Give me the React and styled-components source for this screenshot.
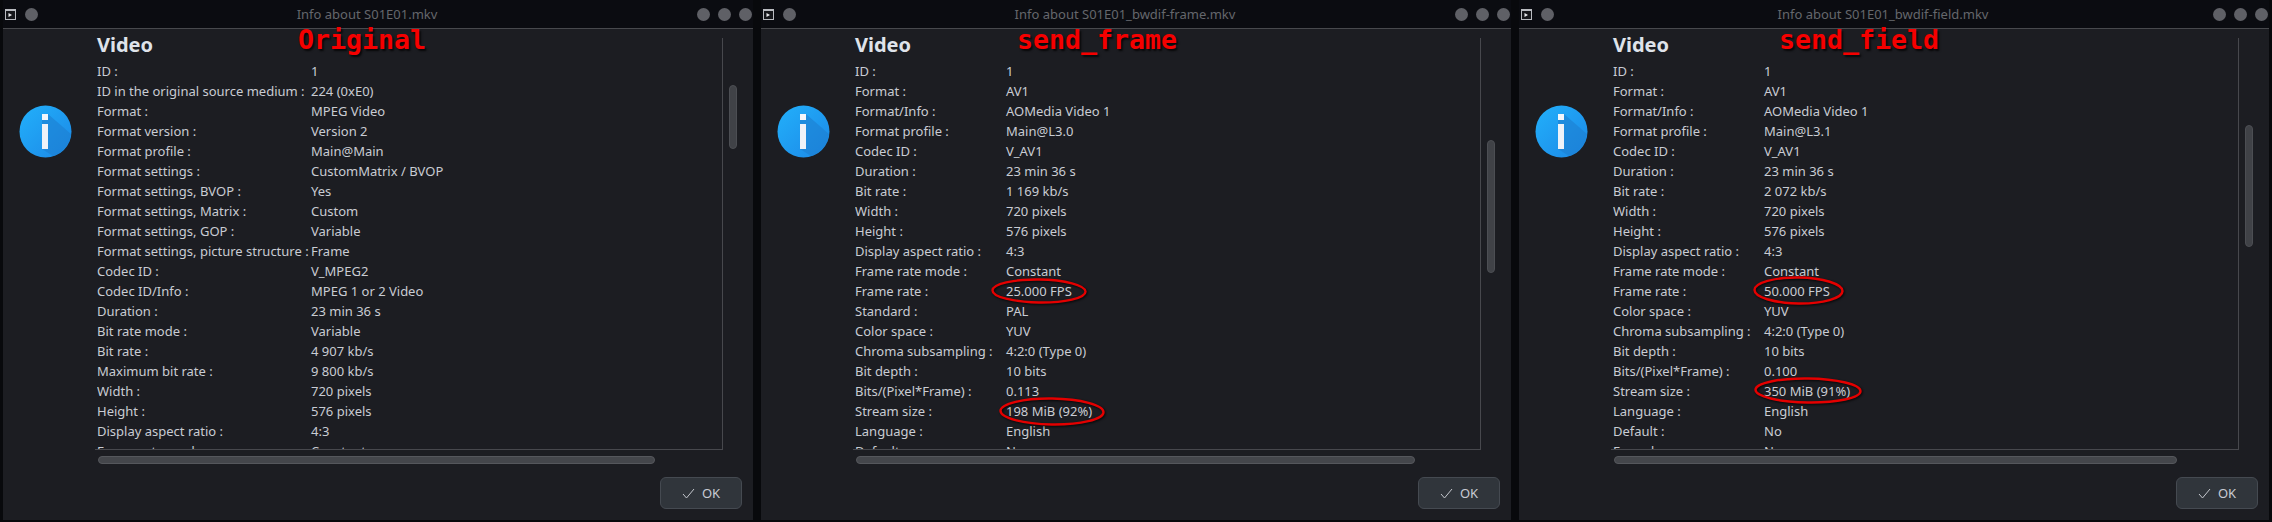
import React from "react";
import styled, { createGlobalStyle } from "styled-components";

const Global = createGlobalStyle`
  html, body { margin: 0; padding: 0; background: #08090c; overflow: hidden; }
  #root { width: 2272px; height: 522px; }
`;

const Page = styled.div`
  display: flex;
  gap: 8px;
  width: 2272px;
  height: 522px;
  padding: 0 0 2px 3px;
  box-sizing: border-box;
  background: #08090c;
  font-family: "Noto Sans", sans-serif;
`;

const Window = styled.section`
  position: relative;
  flex: none;
  width: ${(p) => p.$width}px;
  height: 520px;
  display: flex;
  flex-direction: column;
  background: #1c1d22;
`;

const TitleBar = styled.header`
  flex: none;
  height: 28px;
  padding-right: ${(p) => p.$inset + 1}px;
  border-bottom: 1px solid #48494d;
  background: #0b0c11;
  display: flex;
  align-items: center;
  padding-left: 2px;
`;

const LeftGroup = styled.div`
  display: flex;
  align-items: center;
  gap: 9px;
  width: 62px;
  flex: none;
`;

const RightGroup = styled.div`
  display: flex;
  align-items: center;
  gap: 8px;
  width: 55px;
  flex: none;
  justify-content: flex-end;
`;

const Title = styled.h1`
  flex: 1;
  margin: 0;
  padding-right: 30px;
  text-align: center;
  font-size: 13px;
  font-weight: 400;
  color: #65676c;
  white-space: nowrap;
`;

const Dot = styled.span`
  width: 13px;
  height: 13px;
  border-radius: 50%;
  background: #5f6066;
  display: block;
  flex: none;
`;

const Body = styled.div`
  flex: 1;
  min-height: 0;
  display: flex;
  padding: 9px ${(p) => p.$inset + 30}px 0 0;
`;

const IconColumn = styled.div`
  flex: none;
  width: 92px;
  padding: 67px 0 0 16px;
  box-sizing: border-box;
`;

const Main = styled.div`
  flex: 1;
  min-width: 0;
  display: flex;
  flex-direction: column;
  position: relative;
`;

const Frame = styled.div`
  height: 412px;
  box-sizing: border-box;
  padding-left: 2px;
  display: flex;
  flex-direction: column;
  border-right: 1px solid #47484d;
  border-bottom: 1px solid #47484d;
`;

const Heading = styled.h2`
  flex: none;
  margin: -8px 0 0;
  height: 31px;
  line-height: 30px;
  font-size: 20px;
  font-weight: 700;
  color: #dfe3ea;
`;

const Rows = styled.div`
  flex: 1;
  min-height: 0;
  overflow: hidden;
`;

const Row = styled.div`
  display: flex;
  height: 20px;
  line-height: 20px;
  font-size: 13px;
  color: #c9ccd3;
  white-space: nowrap;
`;

const Label = styled.span`
  flex: none;
  width: ${(p) => p.$width}px;
`;

const Value = styled.span`
  flex: none;
`;

const HTrack = styled.div`
  margin: 6px 0 0 3px;
  width: ${(p) => p.$width}px;
  height: 8px;
  box-sizing: border-box;
  border-radius: 4px;
  background: #44464b;
  border: 1px solid #55575c;
`;

const Footer = styled.div`
  display: flex;
  justify-content: flex-end;
  margin: 13px -19px 0 0;
`;

const OkButton = styled.button`
  width: 82px;
  height: 32px;
  box-sizing: border-box;
  border: 1px solid #454a51;
  border-radius: 6px;
  background: #30353b;
  color: #c9ccd3;
  font-family: inherit;
  font-size: 13px;
  display: flex;
  align-items: center;
  justify-content: center;
  gap: 7px;
  padding: 0;
`;

const VRail = styled.div`
  position: absolute;
  top: 0;
  right: -14px;
  width: 8px;
`;

const VThumb = styled.div`
  margin-top: ${(p) => p.$top}px;
  height: ${(p) => p.$height}px;
  box-sizing: border-box;
  border-radius: 4px;
  background: #404247;
  border: 1px solid #4c4e53;
`;

const Caption = styled.div`
  position: absolute;
  left: ${(p) => p.$left}px;
  top: 24px;
  font-family: "DejaVu Sans Mono", monospace;
  font-weight: 700;
  font-size: 26.6px;
  line-height: 32px;
  color: #f50000;
  text-shadow: 2px 2px 2px rgba(0, 0, 0, 0.75);
  white-space: nowrap;
`;

const Ring = styled.svg`
  position: absolute;
  left: ${(p) => p.$left}px;
  top: ${(p) => p.$top}px;
  width: ${(p) => p.$w}px;
  height: ${(p) => p.$h}px;
  overflow: visible;
  filter: drop-shadow(1px 1px 1px rgba(0, 0, 0, 0.8));
`;

function AppIcon() {
  return (
    <svg width="11" height="11" viewBox="0 0 11 11" style={{ flex: "none" }}>
      <rect x="0.5" y="0.5" width="10" height="10" fill="#15161a" stroke="#b9bbc0" />
      <rect x="0" y="0" width="11" height="2" fill="#b9bbc0" />
      <path d="M3.5 4 L7 6 L3.5 8 Z" fill="#e8e9ec" />
    </svg>
  );
}

function InfoIcon({ id }) {
  return (
    <svg width="53" height="53" viewBox="0 0 53 53" style={{ display: "block" }}>
      <defs>
        <linearGradient id={id} x1="0" y1="0" x2="1" y2="1">
          <stop offset="0" stopColor="#22b0fb" />
          <stop offset="1" stopColor="#1c88e6" />
        </linearGradient>
      </defs>
      <circle cx="26.5" cy="26.5" r="26" fill={`url(#${id})`} />
      <path d="M29 9 L52 29 A26 26 0 0 1 34 51 L23 44 L23 15 Z" fill="#1c7fd0" opacity="0.6" />
      <rect x="23" y="9" width="6" height="6" fill="#f3f6fb" />
      <rect x="23" y="19" width="6" height="25" fill="#eef2f8" />
    </svg>
  );
}

function Check() {
  return (
    <svg width="13" height="11" viewBox="0 0 13 11">
      <path d="M1 6 L4.5 10 L12 1" fill="none" stroke="#c4c7cd" strokeWidth="1" />
    </svg>
  );
}

function Ellipse({ left, top, w, h, tilt }) {
  return (
    <Ring $left={left} $top={top} $w={w} $h={h} viewBox={`0 0 ${w} ${h}`}>
      <ellipse
        cx={w / 2}
        cy={h / 2}
        rx={w / 2 - 1.5}
        ry={h / 2 - 1.5}
        fill="none"
        stroke="#e40000"
        strokeWidth="2.4"
        transform={`rotate(${tilt} ${w / 2} ${h / 2})`}
      />
    </Ring>
  );
}

const windows = [
  {
    key: "a",
    title: "Info about S01E01.mkv",
    caption: "Original",
    captionLeft: 295,
    labelWidth: 214,
    trackWidth: 557,
    thumbTop: 47,
    thumbHeight: 64,
    width: 750,
    inset: 0,
    rings: [],
    rows: [
      ["ID :", "1"],
      ["ID in the original source medium :", "224 (0xE0)"],
      ["Format :", "MPEG Video"],
      ["Format version :", "Version 2"],
      ["Format profile :", "Main@Main"],
      ["Format settings :", "CustomMatrix / BVOP"],
      ["Format settings, BVOP :", "Yes"],
      ["Format settings, Matrix :", "Custom"],
      ["Format settings, GOP :", "Variable"],
      ["Format settings, picture structure :", "Frame"],
      ["Codec ID :", "V_MPEG2"],
      ["Codec ID/Info :", "MPEG 1 or 2 Video"],
      ["Duration :", "23 min 36 s"],
      ["Bit rate mode :", "Variable"],
      ["Bit rate :", "4 907 kb/s"],
      ["Maximum bit rate :", "9 800 kb/s"],
      ["Width :", "720 pixels"],
      ["Height :", "576 pixels"],
      ["Display aspect ratio :", "4:3"],
      ["Frame rate mode :", "Constant"],
    ],
  },
  {
    key: "b",
    title: "Info about S01E01_bwdif-frame.mkv",
    caption: "send_frame",
    captionLeft: 256,
    labelWidth: 151,
    trackWidth: 559,
    thumbTop: 102,
    thumbHeight: 133,
    width: 750,
    inset: 0,
    rings: [
      { left: 230, top: 278, w: 96, h: 26, tilt: 0.8 },
      { left: 238, top: 397, w: 106, h: 29, tilt: 0.8 },
    ],
    rows: [
      ["ID :", "1"],
      ["Format :", "AV1"],
      ["Format/Info :", "AOMedia Video 1"],
      ["Format profile :", "Main@L3.0"],
      ["Codec ID :", "V_AV1"],
      ["Duration :", "23 min 36 s"],
      ["Bit rate :", "1 169 kb/s"],
      ["Width :", "720 pixels"],
      ["Height :", "576 pixels"],
      ["Display aspect ratio :", "4:3"],
      ["Frame rate mode :", "Constant"],
      ["Frame rate :", "25.000 FPS"],
      ["Standard :", "PAL"],
      ["Color space :", "YUV"],
      ["Chroma subsampling :", "4:2:0 (Type 0)"],
      ["Bit depth :", "10 bits"],
      ["Bits/(Pixel*Frame) :", "0.113"],
      ["Stream size :", "198 MiB (92%)"],
      ["Language :", "English"],
      ["Default :", "No"],
    ],
  },
  {
    key: "c",
    title: "Info about S01E01_bwdif-field.mkv",
    caption: "send_field",
    captionLeft: 260,
    labelWidth: 151,
    trackWidth: 563,
    thumbTop: 87,
    thumbHeight: 122,
    width: 750,
    inset: 0,
    rings: [
      { left: 234, top: 276, w: 91, h: 29, tilt: 0.8 },
      { left: 235, top: 377, w: 108, h: 27, tilt: 0.8 },
    ],
    rows: [
      ["ID :", "1"],
      ["Format :", "AV1"],
      ["Format/Info :", "AOMedia Video 1"],
      ["Format profile :", "Main@L3.1"],
      ["Codec ID :", "V_AV1"],
      ["Duration :", "23 min 36 s"],
      ["Bit rate :", "2 072 kb/s"],
      ["Width :", "720 pixels"],
      ["Height :", "576 pixels"],
      ["Display aspect ratio :", "4:3"],
      ["Frame rate mode :", "Constant"],
      ["Frame rate :", "50.000 FPS"],
      ["Color space :", "YUV"],
      ["Chroma subsampling :", "4:2:0 (Type 0)"],
      ["Bit depth :", "10 bits"],
      ["Bits/(Pixel*Frame) :", "0.100"],
      ["Stream size :", "350 MiB (91%)"],
      ["Language :", "English"],
      ["Default :", "No"],
      ["Forced :", "No"],
    ],
  },
];

export default function App() {
  return (
    <Page>
      <Global />
      {windows.map((w) => (
        <Window key={w.key} $width={w.width}>
          <TitleBar $inset={w.inset}>
            <LeftGroup>
              <AppIcon />
              <Dot />
            </LeftGroup>
            <Title>{w.title}</Title>
            <RightGroup>
              <Dot />
              <Dot />
              <Dot />
            </RightGroup>
          </TitleBar>
          <Body $inset={w.inset}>
            <IconColumn>
              <InfoIcon id={`grad-${w.key}`} />
            </IconColumn>
            <Main>
              <Frame>
                <Heading>Video</Heading>
                <Rows>
                  {w.rows.map(([label, value]) => (
                    <Row key={label}>
                      <Label $width={w.labelWidth}>{label}</Label>
                      <Value>{value}</Value>
                    </Row>
                  ))}
                </Rows>
              </Frame>
              <VRail>
                <VThumb $top={w.thumbTop} $height={w.thumbHeight} />
              </VRail>
              <HTrack $width={w.trackWidth} />
              <Footer>
                <OkButton>
                  <Check />
                  OK
                </OkButton>
              </Footer>
            </Main>
          </Body>
          <Caption $left={w.captionLeft}>{w.caption}</Caption>
          {w.rings.map((r) => (
            <Ellipse key={r.top} {...r} />
          ))}
        </Window>
      ))}
    </Page>
  );
}
